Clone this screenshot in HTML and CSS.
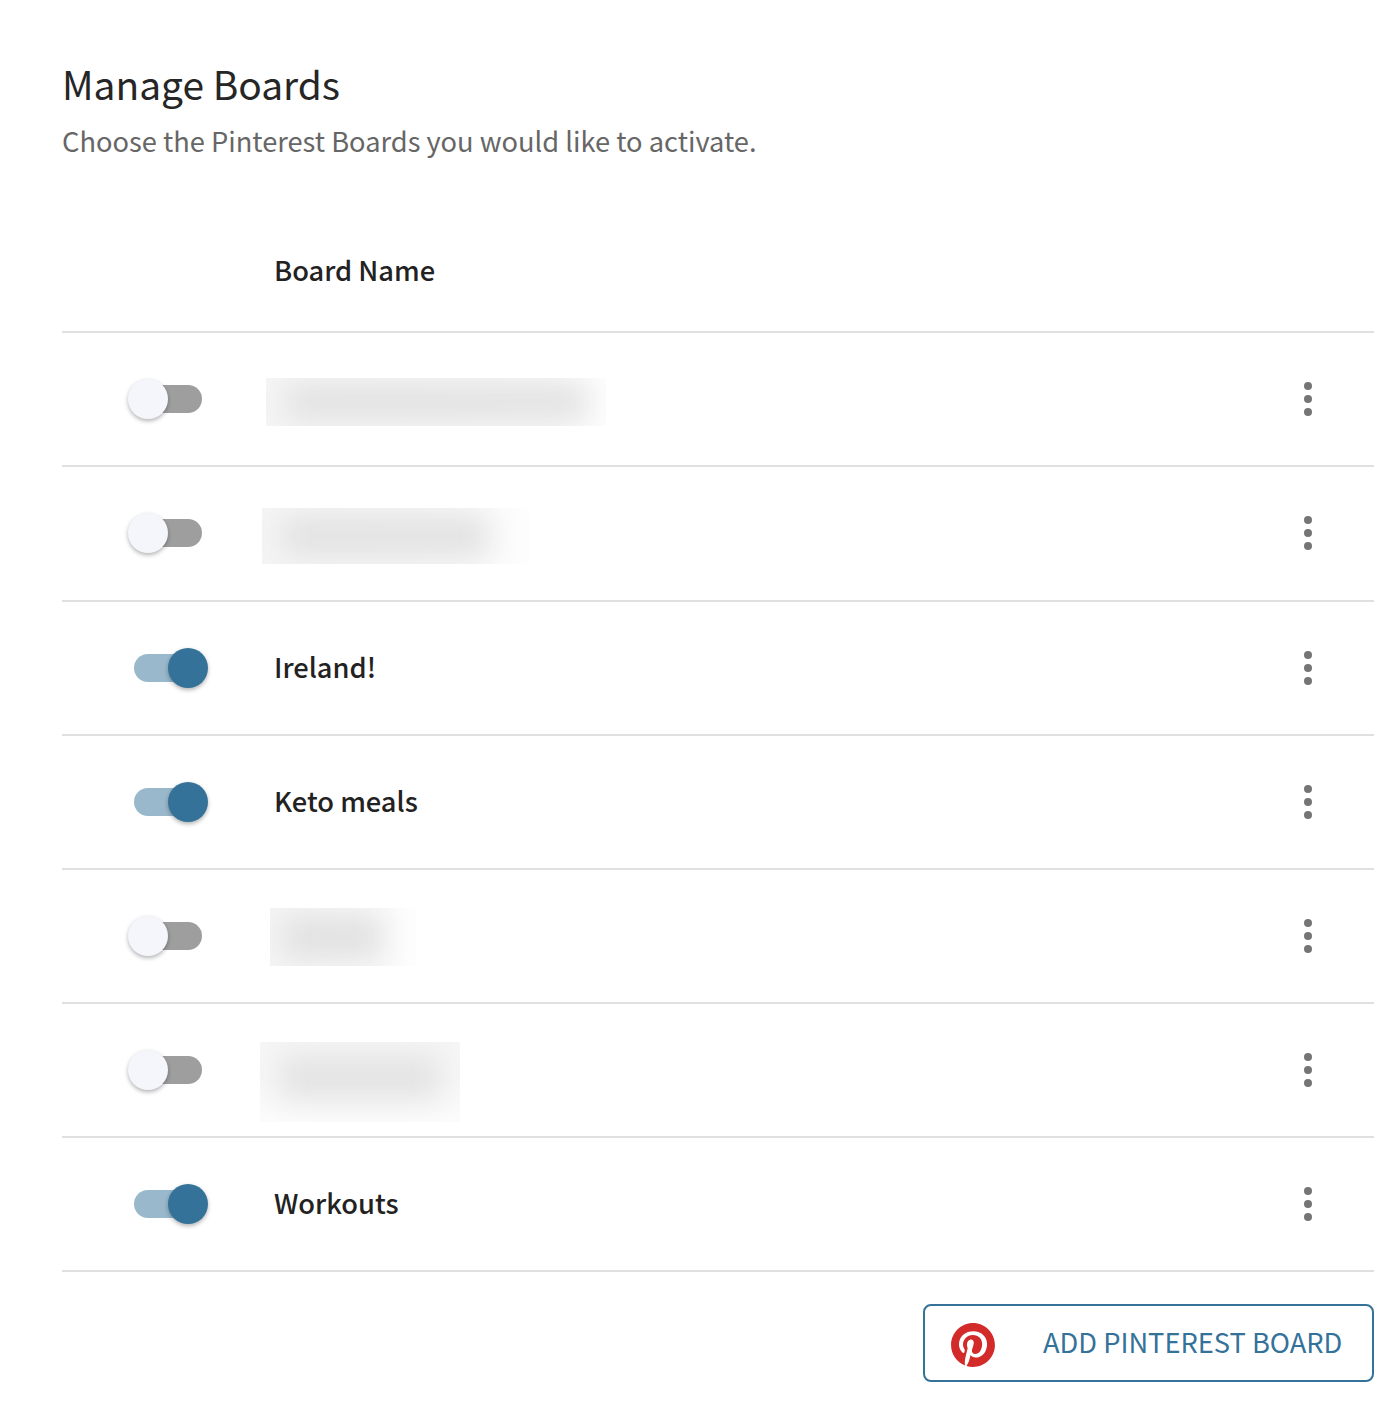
FILE: index.html
```html
<!DOCTYPE html>
<html lang="en">
<head>
<meta charset="utf-8">
<title>Manage Boards</title>
<link rel="stylesheet" href="styles.css">
</head>
<body>
<main class="page">
  <h1 class="title">Manage Boards</h1>
  <p class="subtitle">Choose the Pinterest Boards you would like to activate.</p>
  <div class="head-row"><div class="toggle-col"></div><div class="head-name">Board Name</div></div>
  <div class="row">
    <div class="toggle-col"><span class="switch"><span class="track"></span><span class="knob"></span></span></div>
    <div class="name"><span class="blur blur-a"><i class="smear smear-a"></i></span></div>
    <div class="more"><i></i><i></i><i></i></div>
  </div>
  <div class="row">
    <div class="toggle-col"><span class="switch"><span class="track"></span><span class="knob"></span></span></div>
    <div class="name"><span class="blur blur-b"><i class="smear smear-b"></i></span></div>
    <div class="more"><i></i><i></i><i></i></div>
  </div>
  <div class="row">
    <div class="toggle-col"><span class="switch on"><span class="track"></span><span class="knob"></span></span></div>
    <div class="name">Ireland!</div>
    <div class="more"><i></i><i></i><i></i></div>
  </div>
  <div class="row">
    <div class="toggle-col"><span class="switch on"><span class="track"></span><span class="knob"></span></span></div>
    <div class="name">Keto meals</div>
    <div class="more"><i></i><i></i><i></i></div>
  </div>
  <div class="row">
    <div class="toggle-col"><span class="switch"><span class="track"></span><span class="knob"></span></span></div>
    <div class="name"><span class="blur blur-c"><i class="smear smear-c"></i></span></div>
    <div class="more"><i></i><i></i><i></i></div>
  </div>
  <div class="row">
    <div class="toggle-col"><span class="switch"><span class="track"></span><span class="knob"></span></span></div>
    <div class="name"><span class="blur blur-d"><i class="smear smear-d"></i></span></div>
    <div class="more"><i></i><i></i><i></i></div>
  </div>
  <div class="row">
    <div class="toggle-col"><span class="switch on"><span class="track"></span><span class="knob"></span></span></div>
    <div class="name">Workouts</div>
    <div class="more"><i></i><i></i><i></i></div>
  </div>
  <div class="actions">
    <button class="add-btn" type="button">
      <svg class="pin" viewBox="0 0 24 24" width="44" height="44" aria-hidden="true">
        <circle cx="12" cy="12" r="11" fill="#fff"/>
        <path fill="#d32a2a" d="M12.017 0C5.396 0 .029 5.367.029 11.987c0 5.079 3.158 9.417 7.618 11.162-.105-.949-.199-2.403.041-3.439.219-.937 1.406-5.957 1.406-5.957s-.359-.72-.359-1.781c0-1.663.967-2.911 2.168-2.911 1.024 0 1.518.769 1.518 1.688 0 1.029-.653 2.567-.992 3.992-.285 1.193.6 2.165 1.775 2.165 2.128 0 3.768-2.245 3.768-5.487 0-2.861-2.063-4.869-5.008-4.869-3.41 0-5.409 2.562-5.409 5.199 0 1.033.394 2.143.889 2.741.099.12.112.225.085.345-.09.375-.293 1.199-.334 1.363-.053.225-.172.271-.401.165-1.495-.69-2.433-2.878-2.433-4.646 0-3.776 2.748-7.252 7.92-7.252 4.158 0 7.392 2.967 7.392 6.923 0 4.135-2.607 7.462-6.233 7.462-1.214 0-2.354-.629-2.758-1.379l-.749 2.848c-.269 1.045-1.004 2.352-1.498 3.146 1.123.345 2.306.535 3.55.535 6.607 0 11.985-5.365 11.985-11.987C23.97 5.39 18.592.026 11.985.026L12.017 0z"/>
      </svg>
      <span class="add-label">ADD PINTEREST BOARD</span>
    </button>
  </div>
</main>
</body>
</html>
```
FILE: styles.css
```css
* { box-sizing: border-box; }
html, body { margin: 0; background: #fff; }
body { font-family: "Noto Sans CJK SC", "Noto Sans", sans-serif; color: #212121; }
.page { padding: 55px 20px 0 62px; width: 1394px; }
.title { margin: 0; font-size: 38.9px; line-height: 56px; font-weight: 400; color: #262626; }
.subtitle { margin: 9px 0 0; font-size: 27.25px; line-height: 40px; color: #666; font-weight: 400; }
.head-row { display: flex; align-items: center; height: 134.25px; margin-top: 39px; border-bottom: 2px solid #e0e0e0; padding-top: 8px; }
.toggle-col { width: 212px; flex: none; display: flex; }
.head-name { font-size: 27.25px; line-height: 40px; font-weight: 500; color: #222; }
.row { display: flex; align-items: center; height: 134.15px; border-bottom: 2px solid #e0e0e0; }
.name { flex: 1; font-size: 27.25px; line-height: 40px; font-weight: 500; color: #222; display: flex; align-items: center; margin-top: -4px; }
.switch { position: relative; display: block; width: 80px; height: 44px; margin-left: 66px; }
.track { position: absolute; left: 6px; top: 8px; width: 68px; height: 28px; border-radius: 14px; background: #9e9e9e; }
.knob { position: absolute; left: 0; top: 2px; width: 40px; height: 40px; border-radius: 50%; background: #f5f6fb; box-shadow: 0 2px 4px rgba(0,0,0,.3); }
.switch.on .track { background: #99b8cb; }
.switch.on .knob { left: 40px; background: #347299; }
.blur { position: relative; display: block; overflow: hidden; background: linear-gradient(90deg, #f5f5f5 0%, #f7f7f7 80%, #fdfdfd 100%); }
.smear { position: absolute; background: #e2e2e2; filter: blur(14px); }
.blur-a { width: 340px; height: 48px; margin: 10px 0 0 -8px; }
.smear-a { left: 20px; right: 20px; top: 6px; bottom: 6px; }
.blur-b { width: 268px; height: 56px; margin: 10px 0 0 -12px; background: linear-gradient(90deg, #f5f5f5 0%, #f7f7f7 70%, #fefefe 100%); }
.smear-b { left: 20px; right: 42px; top: 8px; bottom: 8px; }
.blur-c { width: 156px; height: 58px; margin: 6px 0 0 -4px; background: linear-gradient(90deg, #f5f5f5 0%, #f9f9f9 65%, #fff 100%); }
.smear-c { left: 12px; right: 44px; top: 6px; bottom: 6px; }
.blur-d { width: 200px; height: 80px; margin: 28px 0 0 -14px; background: linear-gradient(180deg, #f6f6f6 0%, #f7f7f7 50%, #fcfcfc 100%); }
.smear-d { left: 20px; right: 20px; top: 12px; bottom: 22px; background: #e4e4e4; }
.more { display: flex; flex-direction: column; gap: 5px; align-items: center; width: 20px; margin-right: 56px; }
.more i { display: block; width: 8px; height: 8px; border-radius: 50%; background: #757575; }
.actions { display: flex; justify-content: flex-end; padding-top: 32px; }
.add-btn { display: flex; align-items: center; width: 451px; height: 78px; padding: 0 30px 0 26px; background: #fff; border: 2px solid #347299; border-radius: 8px; font: inherit; }
.pin { flex: none; margin-top: 3px; }
.add-label { margin-left: 48px; margin-bottom: 4px; font-size: 27.25px; line-height: 40px; color: #347299; white-space: nowrap; }
```
